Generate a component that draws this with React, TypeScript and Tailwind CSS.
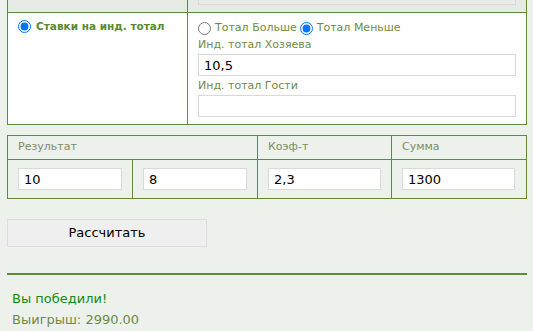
import { useState } from "react";

const border = "border-[#5f8a3a]";

export default function App() {
  const [mode, setMode] = useState<"over" | "under">("under");
  const [home, setHome] = useState("10,5");
  const [guest, setGuest] = useState("");
  const [r1, setR1] = useState("10");
  const [r2, setR2] = useState("8");
  const [coef, setCoef] = useState("2,3");
  const [sum, setSum] = useState("1300");

  const inputCls =
    "block h-[22px] border border-[#d9d9d9] bg-white px-[5px] text-[13px] text-black outline-none";

  return (
    <div
      className="min-h-screen bg-[#ecf1eb] px-[7px] text-[11px] text-[#6f8a45]"
      style={{ fontFamily: '"DejaVu Sans", Verdana, sans-serif' }}
    >
      {/* bets table */}
      <div className={`grid w-[520px] grid-cols-[180px_1fr] border-x border-b ${border}`}>
        <div className={`h-[13px] border-r border-b ${border} bg-[#e6eae5]`} />
        <div className={`h-[13px] border-b ${border} bg-[#e6eae5] px-[10px]`}>
          <div className="h-[5px] border-x border-b border-[#d9d9d9] bg-[#e9ebe8]" />
        </div>

        <div className={`h-[111px] border-r ${border} bg-white px-[10px] pt-[6px]`}>
          <label className="flex items-center gap-[5px] text-[10.5px] font-bold text-[#5b8a33]">
            <input type="radio" defaultChecked className="m-0 h-[13px] w-[13px]" />
            Ставки на инд. тотал
          </label>
        </div>
        <div className="h-[111px] bg-white px-[10px] pt-[7px]">
          <div className="flex h-[16px] items-center">
            <label className="flex items-center gap-[4px]">
              <input
                type="radio"
                name="tot"
                checked={mode === "over"}
                onChange={() => setMode("over")}
                className="m-0 h-[13px] w-[13px]"
              />
              Тотал Больше
            </label>
            <label className="ml-[3px] flex items-center gap-[4px]">
              <input
                type="radio"
                name="tot"
                checked={mode === "under"}
                onChange={() => setMode("under")}
                className="m-0 h-[13px] w-[13px]"
              />
              Тотал Меньше
            </label>
          </div>
          <div className="flex h-[18px] items-center">Инд. тотал Хозяева</div>
          <input value={home} onChange={(e) => setHome(e.target.value)} className={`${inputCls} w-full`} />
          <div className="flex h-[19px] items-center pt-[1px]">Инд. тотал Гости</div>
          <input value={guest} onChange={(e) => setGuest(e.target.value)} className={`${inputCls} w-full`} />
        </div>
      </div>

      {/* result table */}
      <div className={`mt-[10px] grid w-[520px] grid-cols-[125px_125px_134px_1fr] border-t border-l ${border} text-[#7d8c66]`}>
        <div className={`col-span-2 flex h-[24px] items-center border-r border-b ${border} px-[10px]`}>Результат</div>
        <div className={`flex h-[24px] items-center border-r border-b ${border} px-[10px]`}>Коэф-т</div>
        <div className={`flex h-[24px] items-center border-r border-b ${border} px-[10px]`}>Сумма</div>

        <div className={`border-r border-b ${border} px-[10px] py-[8px]`}>
          <input value={r1} onChange={(e) => setR1(e.target.value)} className={`${inputCls} w-[104px]`} />
        </div>
        <div className={`border-r border-b ${border} px-[10px] py-[8px]`}>
          <input value={r2} onChange={(e) => setR2(e.target.value)} className={`${inputCls} w-[104px]`} />
        </div>
        <div className={`border-r border-b ${border} px-[10px] py-[8px]`}>
          <input value={coef} onChange={(e) => setCoef(e.target.value)} className={`${inputCls} w-[113px]`} />
        </div>
        <div className={`border-r border-b ${border} px-[10px] py-[8px]`}>
          <input value={sum} onChange={(e) => setSum(e.target.value)} className={`${inputCls} w-[113px]`} />
        </div>
      </div>

      <button className="mt-[20px] block h-[28px] w-[200px] border border-[#dcdcdc] bg-[#efefef] text-[13px] text-black">
        Рассчитать
      </button>

      <div className="mt-[26px] h-[2px] w-[520px] bg-[#5f8a3a]" />

      <div className="mt-[13px] px-[5px] text-[13px] leading-[21px]">
        <div className="text-[#168a16]">Вы победили!</div>
        <div className="text-[#6f8a45]">Выигрыш: 2990.00</div>
      </div>
    </div>
  );
}
